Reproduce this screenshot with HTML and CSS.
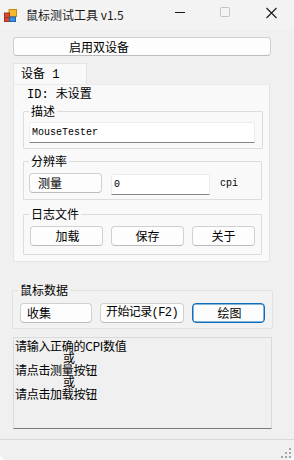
FILE: index.html
```html
<!DOCTYPE html>
<html lang="zh-CN">
<head>
  <meta charset="UTF-8">
  <title>鼠标测试工具 v1.5</title>
  <link rel="stylesheet" href="styles.css">
</head>
<body>
  <div class="window">
    <div class="titlebar">
      <svg class="app-icon" width="13" height="13" viewBox="0 0 13 13">
        <rect x="5" y="0.5" width="7.5" height="7" fill="#f6b92b" stroke="#c98a12" stroke-width="1"/>
        <rect x="0.5" y="4" width="5" height="4.5" fill="#e0472f" stroke="#a8311f" stroke-width="1"/>
        <rect x="0.5" y="8.5" width="5" height="4" fill="#e0472f" stroke="#a8311f" stroke-width="1"/>
        <rect x="5.5" y="8" width="6" height="4.5" fill="#3d8fe0" stroke="#2364a8" stroke-width="1"/>
      </svg>
      <span class="title">鼠标测试工具 v1.5</span>
      <svg class="caption" width="120" height="30" viewBox="0 0 120 30">
        <line x1="1" y1="12.5" x2="11" y2="12.5" stroke="#1a1a1a" stroke-width="1"/>
        <rect x="46.5" y="7.5" width="9" height="9" rx="1" fill="none" stroke="#c4c4c4" stroke-width="1"/>
        <path d="M92.5 8 L102.5 18 M102.5 8 L92.5 18" stroke="#1a1a1a" stroke-width="1.1"/>
      </svg>
    </div>

    <div class="client">
      <button class="btn btn-dual">启用双设备</button>

      <div class="tabs">
        <div class="tab-head">设备 1</div>
        <div class="tab-panel">
          <div class="id-line">ID: 未设置</div>

          <fieldset class="group g-desc">
            <legend>描述</legend>
            <div class="textbox desc-box">MouseTester</div>
          </fieldset>

          <fieldset class="group g-res">
            <legend>分辨率</legend>
            <div class="row">
              <button class="btn btn-measure">测量</button>
              <div class="textbox cpi-box">0</div>
              <span class="unit">cpi</span>
            </div>
          </fieldset>

          <fieldset class="group g-log">
            <legend>日志文件</legend>
            <div class="row">
              <button class="btn btn-load">加载</button>
              <button class="btn btn-save">保存</button>
              <button class="btn btn-about">关于</button>
            </div>
          </fieldset>
        </div>
      </div>

      <fieldset class="group g-data">
        <legend>鼠标数据</legend>
        <div class="row">
          <button class="btn btn-collect">收集</button>
          <button class="btn btn-record">开始记录(F2)</button>
          <button class="btn btn-plot">绘图</button>
        </div>
      </fieldset>

      <div class="log">
        <div>请输入正确的CPI数值</div>
        <div class="or">或</div>
        <div>请点击测量按钮</div>
        <div class="or">或</div>
        <div>请点击加载按钮</div>
      </div>
    </div>

    <div class="statusbar">
      <svg class="grip" width="12" height="12" viewBox="0 0 12 12">
        <rect x="9" y="1" width="2" height="2" fill="#a6a6a6"/>
        <rect x="5" y="5" width="2" height="2" fill="#a6a6a6"/>
        <rect x="9" y="5" width="2" height="2" fill="#a6a6a6"/>
        <rect x="1" y="9" width="2" height="2" fill="#a6a6a6"/>
        <rect x="5" y="9" width="2" height="2" fill="#a6a6a6"/>
        <rect x="9" y="9" width="2" height="2" fill="#a6a6a6"/>
      </svg>
    </div>
  </div>
</body>
</html>
```

FILE: styles.css
```css
html, body {
  margin: 0;
  padding: 0;
  background: #ffffff;
}

.window {
  width: 294px;
  height: 460px;
  background: #f0f0f0;
  border-radius: 0 0 7px 7px;
  overflow: hidden;
  font-family: "Noto Sans CJK SC", sans-serif;
  font-size: 12px;
  color: #000;
}

.titlebar {
  height: 30px;
  display: flex;
  align-items: center;
  background: #f3f3f3;
}

.app-icon {
  margin-left: 4px;
  margin-top: 1px;
}

.title {
  margin-left: 9px;
  font-size: 12px;
  line-height: 14px;
  color: #1a1a1a;
}

.caption {
  margin-left: auto;
}

.client {
  display: flex;
  flex-direction: column;
  align-items: flex-start;
}

.btn {
  box-sizing: border-box;
  height: 20px;
  padding: 0;
  margin: 0;
  background: #fdfdfd;
  border: 1px solid #d0d0d0;
  border-bottom-color: #bcbcbc;
  border-radius: 4px;
  font-family: "Noto Sans CJK SC", sans-serif;
  font-size: 12px;
  line-height: 16px;
  color: #000;
  text-align: center;
}

.btn-dual {
  margin: 7px 0 0 13px;
  width: 258px;
  height: 19px;
  text-align: left;
  padding-left: 55px;
}

/* tab control */
.tabs {
  margin: 7px 0 0 13px;
  display: flex;
  flex-direction: column;
  align-items: flex-start;
}

.tab-head {
  width: 74px;
  height: 21px;
  box-sizing: border-box;
  padding: 4px 0 0 7px;
  background: #f9f9f9;
  border: 1px solid #e4e4e4;
  border-bottom: none;
  font-family: "Liberation Mono", "Noto Sans CJK SC", monospace;
  font-size: 12px;
  line-height: 14px;
}

.tab-panel {
  box-sizing: border-box;
  width: 257px;
  padding: 3px 0 6px 9px;
  background: #f9f9f9;
  border: 1px solid #e4e4e4;
  border-top-color: #eaeaea;
}

.id-line {
  padding-left: 4px;
  font-family: "Liberation Mono", "Noto Sans CJK SC", monospace;
  font-size: 12px;
  line-height: 14px;
}

/* group boxes */
.group {
  box-sizing: border-box;
  margin: 0;
  padding: 0 5px 5px 5px;
  border: 1px solid #dcdcdc;
  border-radius: 1px;
  min-width: 0;
}

.group legend {
  padding: 0 2px;
  margin-left: 0;
  font-size: 12px;
  line-height: 14px;
}

.row {
  display: flex;
  align-items: flex-start;
}

.textbox {
  box-sizing: border-box;
  height: 21px;
  padding: 3px 0 0 2px;
  background: #ffffff;
  border: 1px solid #ececec;
  border-bottom: 1px solid #858585;
  border-radius: 2px 2px 0 0;
  font-family: "Liberation Mono", "Noto Sans CJK SC", monospace;
  font-size: 10px;
  line-height: 14px;
}

.g-desc {
  margin-top: 2px;
  width: 240px;
  padding-top: 4px;
}

.desc-box {
  width: 226px;
}

.g-res {
  margin-top: 5px;
  width: 239px;
  padding-top: 5px;
  padding-bottom: 4px;
}

.btn-measure {
  width: 73px;
  text-align: left;
  padding-left: 8px;
}

.cpi-box {
  margin: 1px 0 0 9px;
  width: 99px;
}

.unit {
  margin: 4px 0 0 10px;
  font-family: "Liberation Mono", monospace;
  font-size: 10px;
  line-height: 14px;
}

.g-log {
  margin-top: 7px;
  width: 239px;
  padding-top: 5px;
  padding-bottom: 8px;
}

.btn-load {
  width: 73px;
  margin-left: 1px;
  padding-left: 2px;
}

.btn-save {
  width: 73px;
  margin-left: 8px;
}

.btn-about {
  width: 63px;
  margin-left: 8px;
}

/* mouse data */
.g-data {
  margin: 21px 0 0 12px;
  width: 261px;
  padding-top: 6px;
  background: #f2f2f2;
  border-color: #e2e2e2;
}

.btn-collect {
  width: 72px;
  margin-left: 2px;
  text-align: left;
  padding-left: 6px;
}

.btn-record {
  width: 84px;
  margin-left: 8px;
  font-family: "Liberation Mono", "Noto Sans CJK SC", monospace;
  font-size: 12px;
  letter-spacing: -0.6px;
}

.btn-plot {
  width: 73px;
  margin-left: 8px;
  border-color: #0f6cbd;
  box-shadow: inset 0 0 0 0.5px #0f6cbd;
  padding-left: 2px;
}

/* output box */
.log {
  box-sizing: border-box;
  margin: 8px 0 0 13px;
  width: 259px;
  height: 92px;
  padding: 2px 0 0 1px;
  border: 1px solid #dadada;
  border-bottom: 1px solid #7a7a7a;
  background: #f0f0f0;
  font-size: 12px;
  line-height: 12px;
  letter-spacing: -0.3px;
}

.log .or {
  padding-left: 48px;
}

.statusbar {
  margin-top: 10px;
  height: 21px;
  border-top: 1px solid #d9d9d9;
  display: flex;
  justify-content: flex-end;
  align-items: flex-end;
}

.grip {
  margin: 0 2px 2px 0;
}
```
